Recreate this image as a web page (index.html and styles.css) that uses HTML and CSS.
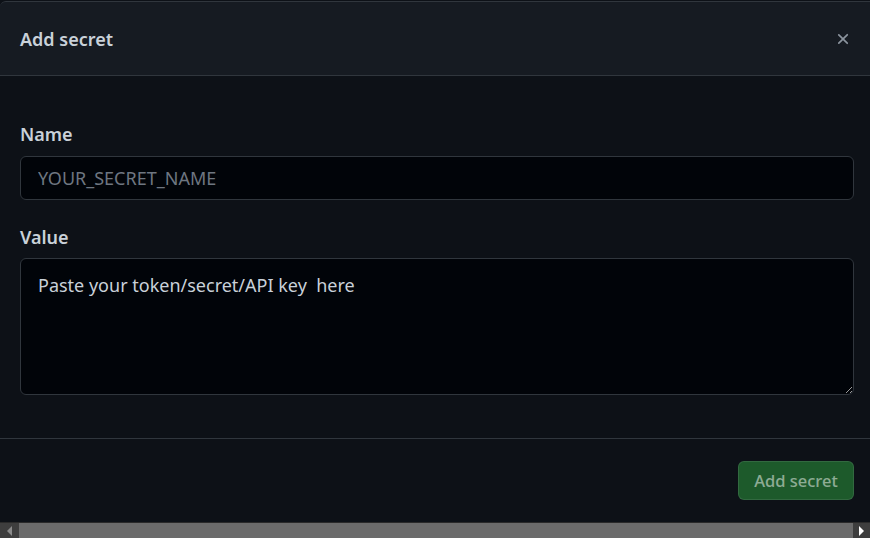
FILE: index.html
```html
<!DOCTYPE html>
<html>
<head>
<meta charset="utf-8">
<link rel="stylesheet" href="styles.css">
</head>
<body>
<div class="page">
  <div class="dialog">
    <div class="header">
      <h1 class="title">Add secret</h1>
      <button class="close" aria-label="Close">
        <svg width="18" height="18" viewBox="0 0 16 16"><path d="M3.72 3.72a.75.75 0 0 1 1.06 0L8 6.94l3.22-3.22a.75.75 0 1 1 1.06 1.06L9.06 8l3.22 3.22a.75.75 0 1 1-1.06 1.06L8 9.06l-3.22 3.22a.75.75 0 0 1-1.06-1.06L6.94 8 3.72 4.78a.75.75 0 0 1 0-1.06Z" fill="#8b949e"/></svg>
      </button>
    </div>
    <div class="body">
      <label class="label">Name</label>
      <input class="input" type="text" placeholder="YOUR_SECRET_NAME">
      <label class="label value-label">Value</label>
      <textarea class="textarea">Paste your token/secret/API key  here</textarea>
    </div>
    <div class="footer">
      <button class="btn">Add secret</button>
    </div>
  </div>
  <div class="scrollbar">
    <div class="sb-btn"><span class="tri-left"></span></div>
    <div class="sb-thumb"></div>
    <div class="sb-btn sb-right"><span class="tri-right"></span></div>
  </div>
</div>
</body>
</html>
```
FILE: styles.css
```css
* { box-sizing: border-box; }
html, body { margin: 0; padding: 0; background: #0d1117; }
body { font-family: "Noto Sans", "Open Sans", sans-serif; color: #c9d1d9; }
.page { width: 870px; height: 538px; display: flex; flex-direction: column; overflow: hidden; }
.dialog { flex: 1; display: flex; flex-direction: column; background: #0d1117; }
.header {
  height: 75px;
  background: #161b22;
  border-top: 1px solid #30363d;
  border-bottom: 1px solid #30363d;
  border-top-left-radius: 6px;
  margin-top: 1px;
  display: flex;
  align-items: center;
  justify-content: space-between;
  padding: 0 18px 0 20px;
}
.title { margin: 0; font-size: 18px; font-weight: 600; color: #c9d1d9; }
.close { background: none; border: 0; padding: 0; width: 18px; height: 18px; display: flex; }
.body { padding: 45px 16px 0 20px; display: flex; flex-direction: column; height: 363px; border-bottom: 1px solid #30363d; }
.label { font-size: 18px; font-weight: 600; color: #c9d1d9; line-height: 26px; margin-bottom: 9px; }
.value-label { margin-top: 24px; margin-bottom: 8px; }
.input, .textarea {
  background: #010409;
  border: 1px solid #30363d;
  border-radius: 6px;
  color: #c9d1d9;
  font-family: inherit;
  font-size: 18px;
  padding: 0 17px;
  outline: none;
}
.input { height: 44px; flex: none; }
.input::placeholder { color: #6e7681; }
.textarea { height: 137px; flex: none; padding-top: 13px; resize: vertical; line-height: 26px; }
.footer { flex: 1; display: flex; justify-content: flex-end; align-items: center; padding: 0 16px 0 0; }
.btn {
  height: 39px;
  width: 116px;
  background: #1d5a2b;
  border: 1px solid rgba(240,246,252,0.1);
  border-radius: 6px;
  color: rgba(255,255,255,0.5);
  font-family: inherit;
  font-size: 16.5px;
  font-weight: 500;
  padding: 0;
}
.scrollbar { height: 16px; flex: none; display: flex; background: #3e3e3e; border-top: 1px solid #2a2a2a; }
.sb-btn { width: 19px; display: flex; align-items: center; justify-content: center; background: #3e3e3e; }
.sb-right { width: 17px; }
.sb-thumb { flex: 1; background: #6b6b6b; }
.tri-left { width: 0; height: 0; border-top: 5px solid transparent; border-bottom: 5px solid transparent; border-right: 5px solid #8a8a8a; }
.tri-right { width: 0; height: 0; border-top: 5px solid transparent; border-bottom: 5px solid transparent; border-left: 5px solid #ffffff; }
```
